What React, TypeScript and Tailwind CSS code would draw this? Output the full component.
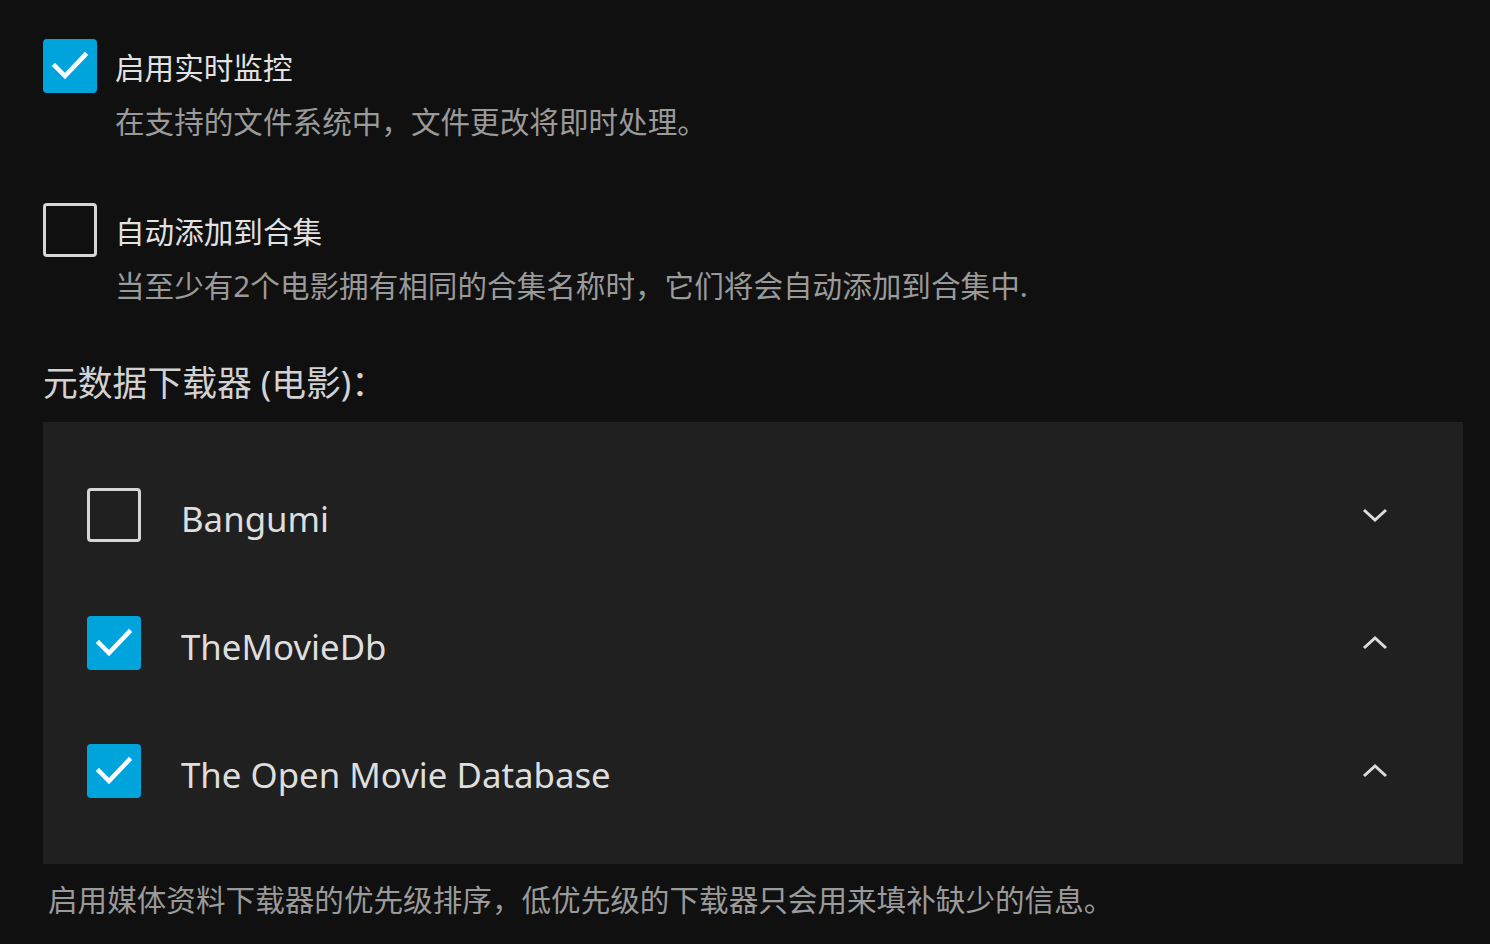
import React from 'react';

const font = { fontFamily: '"Noto Sans", "Noto Sans CJK SC", sans-serif' };

const Check: React.FC<{ checked: boolean }> = ({ checked }) => {
  if (!checked) {
    return <div className="w-[54px] h-[54px] shrink-0 rounded-[4px] border-[3px] border-[#d6d6d6]" />;
  }
  return (
    <div className="w-[54px] h-[54px] shrink-0 rounded-[4px] bg-[#00a4dc] flex items-center justify-center">
      <svg width="54" height="54" viewBox="0 0 54 54">
        <polyline points="12,27 22,37 42,16" fill="none" stroke="#ffffff" strokeWidth="4.5" strokeLinecap="square" />
      </svg>
    </div>
  );
};

const Chevron: React.FC<{ up: boolean }> = ({ up }) => (
  <svg width="28" height="16" viewBox="0 0 28 16" className="shrink-0">
    <polyline
      points={up ? '3,13 14,3 25,13' : '3,3 14,13 25,3'}
      fill="none"
      stroke="#dcdcdc"
      strokeWidth="3"
    />
  </svg>
);

const Toggle: React.FC<{ checked: boolean; label: string; desc: string }> = ({ checked, label, desc }) => (
  <div>
    <div className="flex items-center gap-[18px]">
      <Check checked={checked} />
      <span className="text-[29.6px] leading-[40px] text-[#e2e2e2] mt-[3px]">{label}</span>
    </div>
    <div className="pl-[72px] mt-[9px] text-[29.6px] leading-[40px] text-[#9a9a9a]">{desc}</div>
  </div>
);

const providers = [
  { name: 'Bangumi', checked: false },
  { name: 'TheMovieDb', checked: true },
  { name: 'The Open Movie Database', checked: true },
];

export default function App() {
  return (
    <div className="w-[1490px] h-[944px] bg-[#101010] overflow-hidden" style={font}>
      <div className="pl-[43px] pr-[27px] pt-[39px]">
        <Toggle checked={true} label="启用实时监控" desc="在支持的文件系统中，文件更改将即时处理。" />
        <div className="mt-[61px]">
          <Toggle checked={false} label="自动添加到合集" desc="当至少有2个电影拥有相同的合集名称时，它们将会自动添加到合集中." />
        </div>
        <div className="mt-[54px] text-[34.8px] leading-[46px] text-[#d2d2d2]">元数据下载器 (电影)：</div>
        <div className="mt-[16px] bg-[#202020] py-[29px] pl-[44px] pr-[74px]">
          {providers.map((p) => (
            <div key={p.name} className="h-[128px] flex items-center">
              <Check checked={p.checked} />
              <span className="ml-[40px] flex-1 text-[34.8px] text-[#dedede] mt-[8px]">{p.name}</span>
              <Chevron up={p.checked} />
            </div>
          ))}
        </div>
        <div className="mt-[16px] pl-[5px] text-[29.6px] leading-[40px] text-[#9a9a9a]">
          启用媒体资料下载器的优先级排序，低优先级的下载器只会用来填补缺少的信息。
        </div>
      </div>
    </div>
  );
}
